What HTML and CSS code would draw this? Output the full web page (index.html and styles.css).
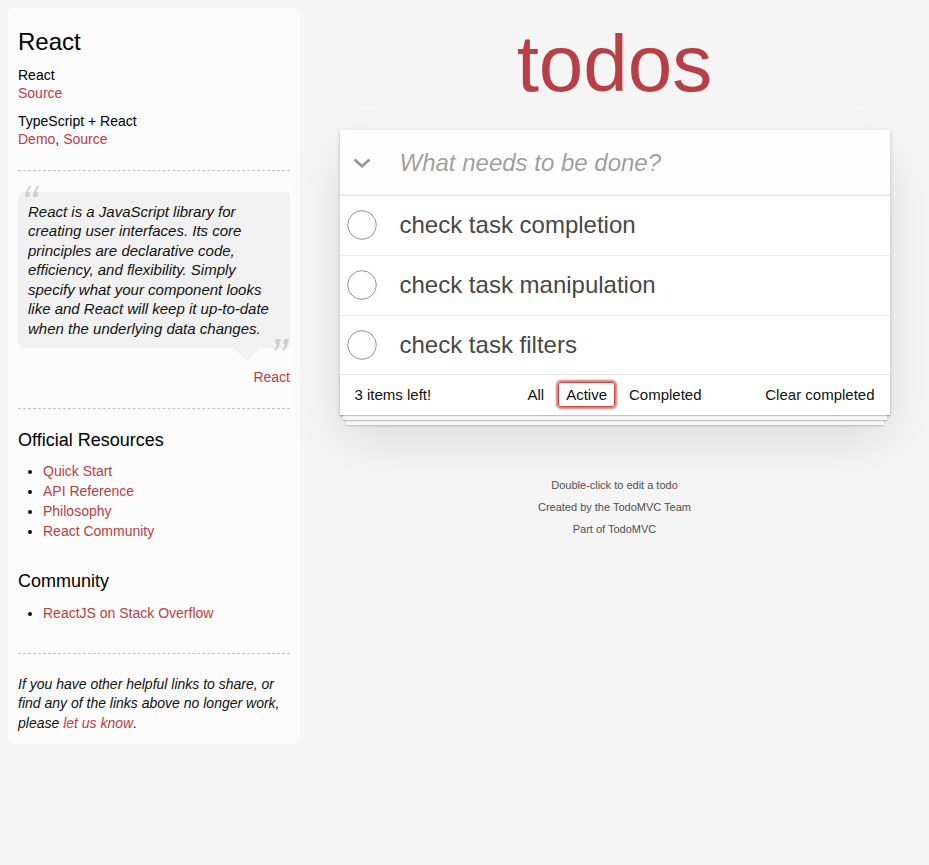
FILE: index.html
```html
<!DOCTYPE html>
<html lang="en">
<head>
<meta charset="utf-8">
<title>React • TodoMVC</title>
<link rel="stylesheet" href="styles.css">
</head>
<body>
<div class="page">
  <aside class="learn">
    <header>
      <h3>React</h3>
      <span class="source-links">
        <h5>React</h5>
        <a href="#">Source</a><br>
        <h5>TypeScript + React</h5>
        <a href="#">Demo</a>, <a href="#">Source</a>
      </span>
    </header>
    <hr>
    <blockquote class="quote">
      <div class="speech-bubble">
        <p>React is a JavaScript library for creating user interfaces. Its core principles are declarative code, efficiency, and flexibility. Simply specify what your component looks like and React will keep it up-to-date when the underlying data changes.</p>
      </div>
      <footer class="quote-source"><a href="#">React</a></footer>
    </blockquote>
    <hr>
    <h4>Official Resources</h4>
    <ul>
      <li><a href="#">Quick Start</a></li>
      <li><a href="#">API Reference</a></li>
      <li><a href="#">Philosophy</a></li>
      <li><a href="#">React Community</a></li>
    </ul>
    <h4>Community</h4>
    <ul>
      <li><a href="#">ReactJS on Stack Overflow</a></li>
    </ul>
    <footer class="learn-footer">
      <hr>
      <em>If you have other helpful links to share, or find any of the links above no longer work, please <a href="#">let us know</a>.</em>
    </footer>
  </aside>

  <div class="app-col">
    <h1 class="title">todos</h1>
    <section class="todoapp">
      <header class="app-header">
        <span class="toggle-all">
          <svg width="18" height="10" viewBox="0 0 18 10"><polyline points="1.5,1.5 9,8.3 16.5,1.5" fill="none" stroke="#949494" stroke-width="2.6"/></svg>
        </span>
        <input class="new-todo" placeholder="What needs to be done?">
      </header>
      <section class="main">
        <ul class="todo-list">
          <li>
            <svg class="toggle" width="30" height="30" viewBox="0 0 30 30"><circle cx="15" cy="15" r="14.3" fill="none" stroke="#949494" stroke-width="1"/></svg>
            <label>check task completion</label>
          </li>
          <li>
            <svg class="toggle" width="30" height="30" viewBox="0 0 30 30"><circle cx="15" cy="15" r="14.3" fill="none" stroke="#949494" stroke-width="1"/></svg>
            <label>check task manipulation</label>
          </li>
          <li>
            <svg class="toggle" width="30" height="30" viewBox="0 0 30 30"><circle cx="15" cy="15" r="14.3" fill="none" stroke="#949494" stroke-width="1"/></svg>
            <label>check task filters</label>
          </li>
        </ul>
      </section>
      <footer class="footer">
        <span class="todo-count">3 items left!</span>
        <ul class="filters"><li><a href="#">All</a></li><li><a href="#" class="selected">Active</a></li><li><a href="#">Completed</a></li></ul>
        <span class="clear-completed">Clear completed</span>
      </footer>
    </section>
    <footer class="info">
      <p>Double-click to edit a todo</p>
      <p>Created by the TodoMVC Team</p>
      <p>Part of TodoMVC</p>
    </footer>
  </div>
</div>
</body>
</html>
```

FILE: styles.css
```css
html, body {
  margin: 0;
  padding: 0;
}

body {
  font: 14px "Liberation Sans", Arial, Helvetica, sans-serif;
  line-height: 1.4em;
  background: #f5f5f5;
  color: #111111;
  font-weight: 300;
}

.page {
  display: grid;
  grid-template-columns: 300px 1fr;
  align-items: start;
}

/* ---------- Learn sidebar ---------- */
.learn {
  margin: 8px 0 0 8px;
  width: 272px;
  padding: 10px;
  border-radius: 5px;
  background-color: rgba(255, 255, 255, 0.6);
}

.learn a {
  font-weight: normal;
  text-decoration: none;
  color: #b83f45;
}

.learn h3,
.learn h4,
.learn h5 {
  margin: 10px 0;
  font-weight: 500;
  line-height: 1.2;
  color: #000;
}

.learn h3 {
  font-size: 24px;
}

.learn h4 {
  font-size: 18px;
}

.learn h5 {
  margin-bottom: 0;
  font-size: 14px;
}

.learn ul {
  padding: 0;
  margin: 0 0 30px 25px;
}

.learn li {
  line-height: 20px;
}

.learn p {
  font-size: 15px;
  font-weight: 300;
  line-height: 1.3;
  margin: 0;
}

.learn hr {
  margin: 20px 0;
  border: 0;
  border-top: 1px dashed #c5c5c5;
  border-bottom: 1px dashed #f7f7f7;
  height: 0;
}

.quote {
  border: none;
  margin: 20px 0 0 0;
}

.quote p {
  font-style: italic;
}

.speech-bubble {
  position: relative;
  padding: 10px;
  background: rgba(0, 0, 0, 0.04);
  border-radius: 5px;
}

.speech-bubble::after {
  content: '';
  position: absolute;
  top: 100%;
  right: 30px;
  border: 13px solid transparent;
  border-top-color: rgba(0, 0, 0, 0.04);
}

.speech-bubble p::before {
  content: '\201C';
  font-size: 50px;
  opacity: 0.15;
  position: absolute;
  top: -20px;
  left: 3px;
}

.speech-bubble p::after {
  content: '\201D';
  font-size: 50px;
  opacity: 0.15;
  position: absolute;
  bottom: -42px;
  right: 3px;
}

.quote-source {
  text-align: right;
  margin: 20px 0 20px;
}

.learn-footer em {
  font-style: italic;
}

/* ---------- Todo app ---------- */
.app-col {
  padding-top: 8px;
}

.title {
  margin: 0 0 10px;
  height: 112px;
  line-height: 112px;
  font-size: 80px;
  font-weight: 200;
  text-align: center;
  color: #b83f45;
}

.todoapp {
  width: 550px;
  margin: 0 auto 40px;
  background: #fff;
  box-shadow: 0 2px 4px 0 rgba(0, 0, 0, 0.2), 0 25px 50px 0 rgba(0, 0, 0, 0.1);
}

.app-header {
  display: flex;
  align-items: center;
  height: 65px;
  background: rgba(0, 0, 0, 0.003);
  box-shadow: inset 0 -2px 1px rgba(0, 0, 0, 0.03);
}

.toggle-all {
  width: 44px;
  display: flex;
  justify-content: center;
  align-items: center;
  padding-top: 1px;
}

.toggle-all svg {
  display: block;
}

.new-todo {
  flex: 1;
  min-width: 0;
  height: 65px;
  box-sizing: border-box;
  padding: 16px 16px 16px 16px;
  border: none;
  background: transparent;
  outline: none;
  font-family: "Liberation Sans", Arial, Helvetica, sans-serif;
  font-size: 24px;
  line-height: 1.4em;
  color: #111;
}

.new-todo::placeholder {
  font-style: italic;
  font-weight: 400;
  color: rgba(0, 0, 0, 0.4);
}

.main {
  border-top: 1px solid #e6e6e6;
}

.todo-list {
  margin: 0;
  padding: 0;
  list-style: none;
}

.todo-list li {
  display: flex;
  align-items: center;
  font-size: 24px;
  border-bottom: 1px solid #ededed;
}

.todo-list li:last-child {
  border-bottom: none;
}

.todo-list .toggle {
  flex: none;
  margin-left: 7px;
  display: block;
}

.todo-list label {
  display: block;
  padding: 15px 15px 15px 23px;
  line-height: 1.2;
  font-weight: 400;
  color: #484848;
}

.footer {
  display: grid;
  grid-template-columns: 1fr auto 1fr;
  align-items: center;
  padding: 9px 15px 11px;
  height: 20px;
  font-size: 15px;
  border-top: 1px solid #e6e6e6;
  box-shadow: 0 1px 1px rgba(0, 0, 0, 0.2),
              0 8px 0 -3px #f6f6f6,
              0 9px 1px -3px rgba(0, 0, 0, 0.2),
              0 16px 0 -6px #f6f6f6,
              0 17px 2px -6px rgba(0, 0, 0, 0.2);
}

.todo-count {
  text-align: left;
}

.filters {
  margin: 0;
  padding: 0;
  list-style: none;
  white-space: nowrap;
}

.filters li {
  display: inline;
}

.filters a {
  color: inherit;
  margin: 3px;
  padding: 3px 7px;
  text-decoration: none;
  border: 1px solid transparent;
  border-radius: 3px;
}

.filters a.selected {
  border-color: #ce4646;
  box-shadow: 0 0 2px 2px #cf7d7d;
}

.clear-completed {
  text-align: right;
  line-height: 19px;
}

.info {
  margin: 65px auto 0;
  color: #4d4d4d;
  font-size: 11px;
  text-shadow: 0 1px 0 rgba(255, 255, 255, 0.5);
  text-align: center;
}

.info p {
  line-height: 1;
  margin: 11px 0;
}
```
